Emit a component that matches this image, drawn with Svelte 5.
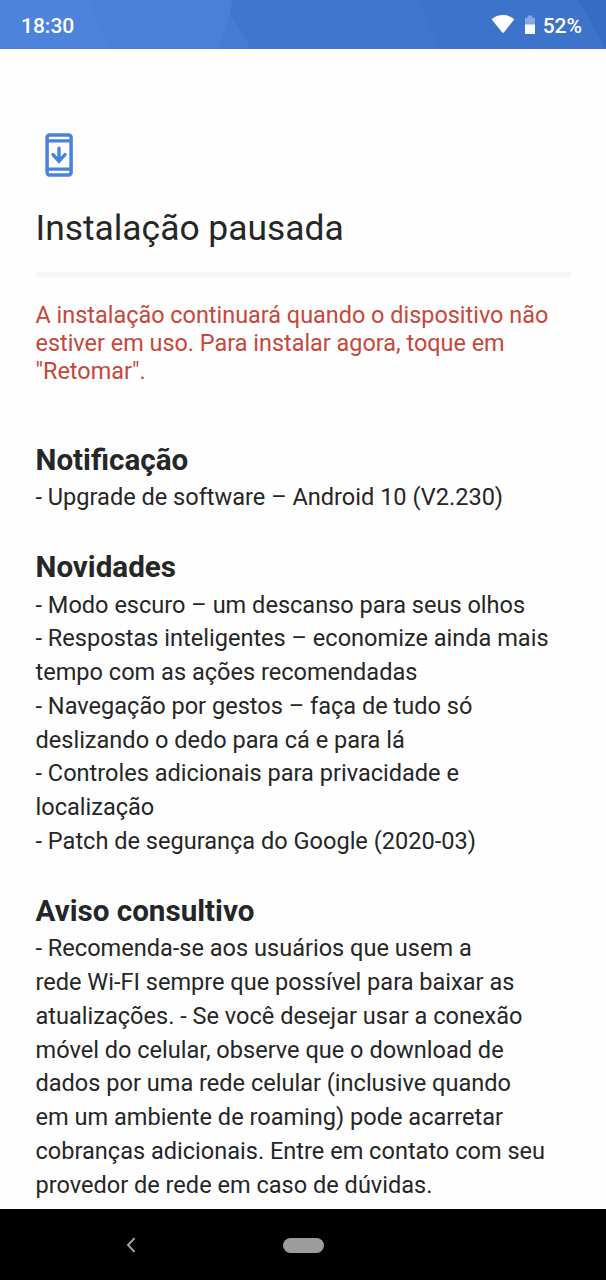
<script>
  const time = "18:30";
  const battery = 52;

  const message = [
    "A instalação continuará quando o dispositivo não",
    "estiver em uso. Para instalar agora, toque em",
    '"Retomar".',
  ];

  const sections = [
    {
      title: "Notificação",
      lines: ["- Upgrade de software – Android 10 (V2.230)"],
    },
    {
      title: "Novidades",
      lines: [
        "- Modo escuro – um descanso para seus olhos",
        "- Respostas inteligentes – economize ainda mais",
        "tempo com as ações recomendadas",
        "- Navegação por gestos – faça de tudo só",
        "deslizando o dedo para cá e para lá",
        "- Controles adicionais para privacidade e",
        "localização",
        "- Patch de segurança do Google (2020-03)",
      ],
    },
    {
      title: "Aviso consultivo",
      lines: [
        "- Recomenda-se aos usuários que usem a",
        "rede Wi-FI sempre que possível para baixar as",
        "atualizações. - Se você desejar usar a conexão",
        "móvel do celular, observe que o download de",
        "dados por uma rede celular (inclusive quando",
        "em um ambiente de roaming) pode acarretar",
        "cobranças adicionais. Entre em contato com seu",
        "provedor de rede em caso de dúvidas.",
      ],
    },
  ];
</script>

<div class="screen">
  <header>
    <svg class="pattern" viewBox="0 0 606 49" preserveAspectRatio="none">
      <rect width="606" height="49" fill="#4a80d8" />
      <path d="M0 0H89L108 49H0Z" fill="#4d83da" />
      <path d="M232 0H606V49H251L230 14Z" fill="#4176ce" />
      <path d="M230 14L251 49H219Z" fill="#457bd3" />
      <path d="M418 0H606V49H440Z" fill="#3e73cb" />
      <path d="M578 0H606V49Z" fill="#386bc2" />
    </svg>
    <span class="time">{time}</span>
    <div class="status">
      <svg class="wifi" viewBox="0 0 24 20" width="24" height="20">
        <path d="M.6 5.3Q5.5 1 12 1t11.4 4.3L12.8 18.4q-.8.9-1.6 0Z" fill="#fff" />
      </svg>
      <svg class="battery" viewBox="0 0 12 20" width="12" height="20">
        <path d="M1 10V3h2.6V.6h4.8V3H11v7Z" fill="#86a8e2" />
        <path d="M1 9.6h10v8.9q0 .5-.5.5h-9q-.5 0-.5-.5Z" fill="#fff" />
      </svg>
      <span>{battery}%</span>
    </div>
  </header>

  <main>
    <svg class="icon" viewBox="0 0 28 44" width="28" height="44">
      <rect x="2.1" y="2.1" width="24" height="39.8" rx="2.4" fill="none" stroke="#4682de" stroke-width="3.5" />
      <path d="M2 7.9h24M2 36.1h24" stroke="#4682de" stroke-width="3.2" />
      <path d="M14 15.2v12.6M8 21.6l6 6.6 6-6.6" fill="none" stroke="#4682de" stroke-width="3.4" stroke-linecap="round" />
    </svg>
    <h1>Instalação pausada</h1>
    <hr />
    <p class="message">{message.join("\n")}</p>

    {#each sections as section}
      <section>
        <h2>{section.title}</h2>
        <p>{section.lines.join("\n")}</p>
      </section>
    {/each}
  </main>

  <nav>
    <svg class="back" viewBox="0 0 10 16" width="10" height="16">
      <path d="M8.6 1.2L2 8l6.6 6.8" fill="none" stroke="#a8a8a8" stroke-width="1.9" />
    </svg>
    <div class="home"></div>
  </nav>
</div>

<style>
  :global(body) {
    margin: 0;
    background: #fefefe;
  }

  .screen {
    display: flex;
    flex-direction: column;
    width: 606px;
    height: 1280px;
    overflow: hidden;
    font-family: Roboto, sans-serif;
    color: #262626;
    background: #fefefe;
  }

  header {
    position: relative;
    display: flex;
    flex: none;
    align-items: center;
    justify-content: space-between;
    box-sizing: border-box;
    height: 49px;
    padding: 3px 24px 0 21px;
    font-size: 21px;
    font-weight: 500;
    color: #fff;
  }

  .pattern {
    position: absolute;
    top: 0;
    left: 0;
    width: 100%;
    height: 100%;
  }

  .time,
  .status {
    position: relative;
  }

  .status {
    display: flex;
    align-items: center;
  }

  .wifi {
    margin: -5px 9px 0 0;
  }

  .battery {
    margin: -3px 7px 0 0;
  }

  main {
    flex: 1;
    min-height: 0;
    padding: 84px 35px 0 35.5px;
  }

  .icon {
    display: block;
    margin-left: 9.5px;
  }

  h1,
  h2,
  p {
    margin: 0;
    white-space: pre;
  }

  h1 {
    margin-top: 28px;
    font-size: 35.4px;
    font-weight: 400;
    line-height: 47px;
  }

  hr {
    height: 6px;
    margin: 20px 0 0;
    border: none;
    background: #f7f7f7;
  }

  p {
    font-size: 23.55px;
    line-height: 33.75px;
  }

  .message {
    margin: 24px 0 54.5px;
    font-size: 23.43px;
    line-height: 27.8px;
    color: #c8473a;
  }

  section {
    margin-bottom: 32.6px;
  }

  h2 {
    padding-bottom: 1.2px;
    font-size: 29.6px;
    font-weight: 700;
    line-height: 40px;
  }

  nav {
    display: flex;
    flex: none;
    align-items: center;
    height: 71px;
    background: #000;
  }

  .back {
    margin-left: 126px;
  }

  .home {
    width: 41px;
    height: 15px;
    margin: 1px 0 0 147px;
    border-radius: 8px;
    background: #9c9c9c;
  }
</style>
